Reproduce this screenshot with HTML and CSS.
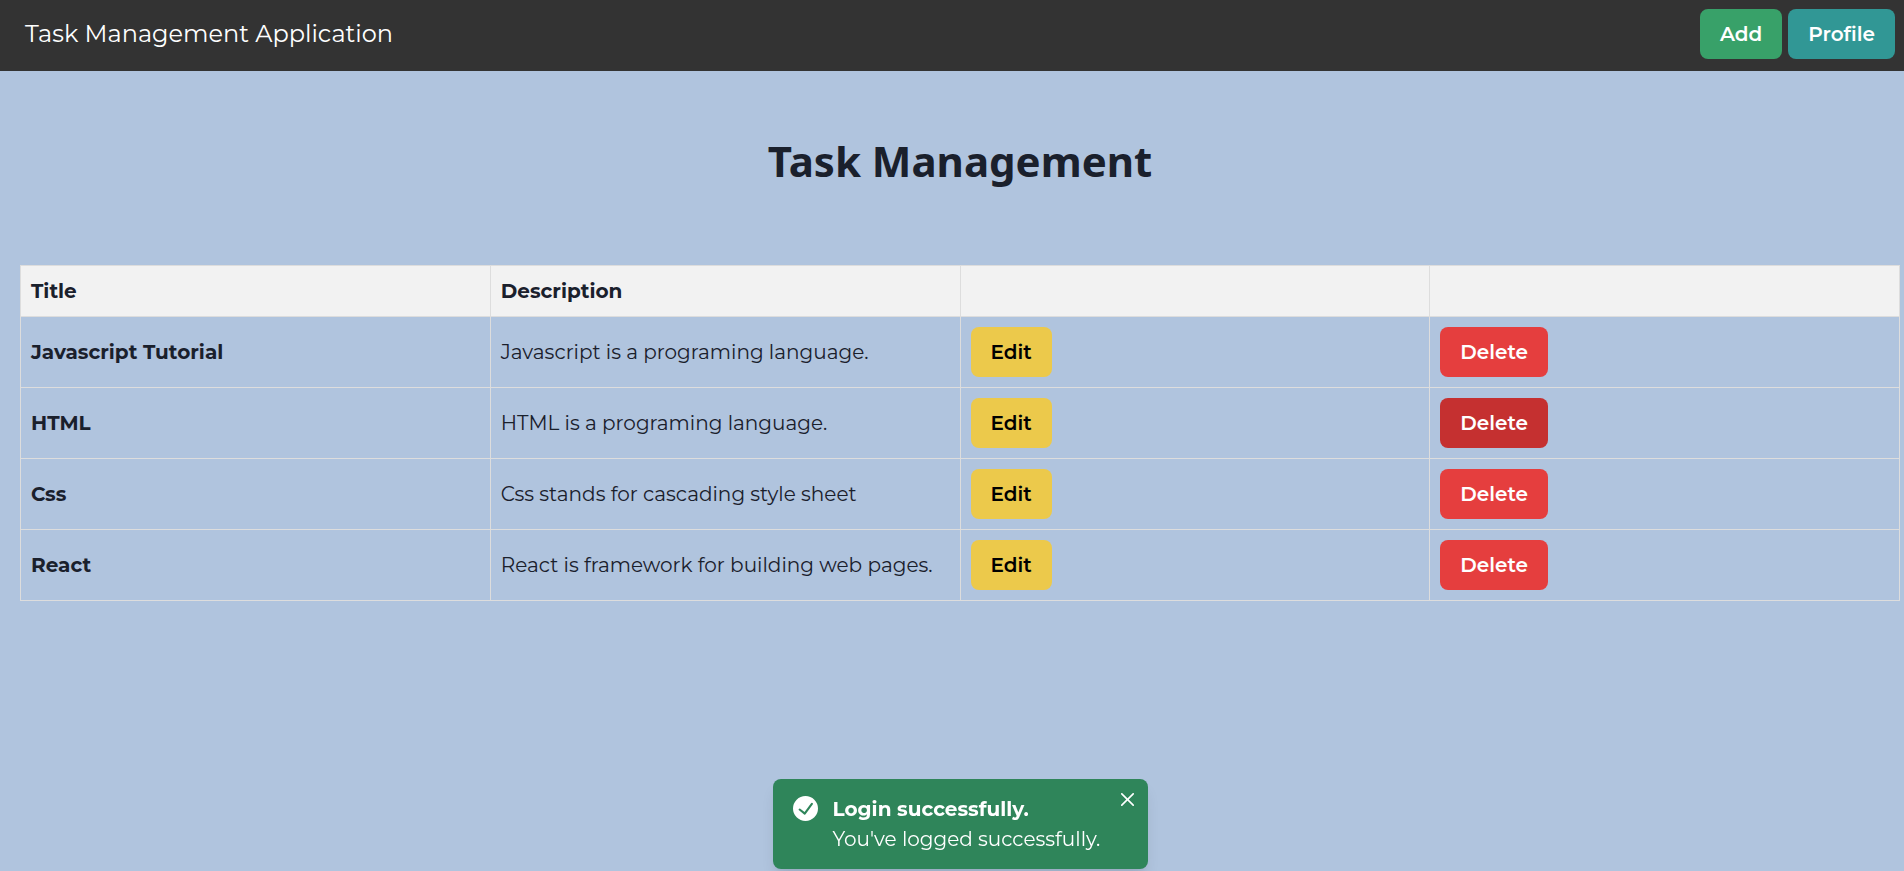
FILE: index.html
```html
<!DOCTYPE html>
<html lang="en">
<head>
  <meta charset="utf-8">
  <meta name="viewport" content="width=device-width, initial-scale=1">
  <title>Task Management Application</title>
  <link rel="stylesheet" href="styles.css">
</head>
<body>
  <header class="navbar">
    <a class="brand" href="#">Task Management Application</a>
    <nav class="nav-actions">
      <button class="btn btn-add" type="button">Add</button>
      <button class="btn btn-profile" type="button">Profile</button>
    </nav>
  </header>

  <main class="content">
    <h1 class="page-title">Task Management</h1>
    <table class="tasks">
      <thead>
        <tr><th scope="col">Title</th><th scope="col">Description</th><th></th><th></th></tr>
      </thead>
      <tbody>
        <tr>
          <th scope="row">Javascript Tutorial</th>
          <td>Javascript is a programing language.</td>
          <td><button class="btn btn-edit" type="button">Edit</button></td>
          <td><button class="btn btn-delete" type="button">Delete</button></td>
        </tr>
        <tr>
          <th scope="row">HTML</th>
          <td>HTML is a programing language.</td>
          <td><button class="btn btn-edit" type="button">Edit</button></td>
          <td><button class="btn btn-delete is-hovered" type="button">Delete</button></td>
        </tr>
        <tr>
          <th scope="row">Css</th>
          <td>Css stands for cascading style sheet</td>
          <td><button class="btn btn-edit" type="button">Edit</button></td>
          <td><button class="btn btn-delete" type="button">Delete</button></td>
        </tr>
        <tr>
          <th scope="row">React</th>
          <td>React is framework for building web pages.</td>
          <td><button class="btn btn-edit" type="button">Edit</button></td>
          <td><button class="btn btn-delete" type="button">Delete</button></td>
        </tr>
      </tbody>
    </table>
  </main>

  <div class="toast-region">
    <div class="toast" role="status">
      <svg class="toast-icon" viewBox="0 0 24 24" aria-hidden="true">
        <path fill="currentColor" d="M12,0A12,12,0,1,0,24,12,12.014,12.014,0,0,0,12,0Zm6.927,8.2-6.845,9.289a1.011,1.011,0,0,1-1.43.188L5.764,13.769a1,1,0,1,1,1.25-1.562l4.076,3.261,6.227-8.451A1,1,0,1,1,18.927,8.2Z"/>
      </svg>
      <div class="toast-body">
        <div class="toast-title">Login successfully.</div>
        <div class="toast-text">You've logged successfully.</div>
      </div>
      <button class="toast-close" type="button" aria-label="Close">
        <svg viewBox="0 0 24 24" aria-hidden="true">
          <path fill="currentColor" d="M.439,21.44a1.5,1.5,0,0,0,2.122,2.121L11.823,14.3a.25.25,0,0,1,.354,0l9.262,9.263a1.5,1.5,0,1,0,2.122-2.121L14.3,12.177a.25.25,0,0,1,0-.354l9.263-9.262A1.5,1.5,0,0,0,21.439.44L12.177,9.7a.25.25,0,0,1-.354,0L2.561.44A1.5,1.5,0,0,0,.439,2.561L9.7,11.823a.25.25,0,0,1,0,.354Z"/>
        </svg>
      </button>
    </div>
  </div>
</body>
</html>
```
FILE: styles.css
```css
* {
  box-sizing: border-box;
}

body {
  margin: 0;
  min-height: 100vh;
  background: #b0c4de;
  color: #1a202c;
  font-family: Montserrat, Inter, sans-serif;
  font-size: 20px;
  line-height: 30px;
}

.navbar {
  display: flex;
  align-items: center;
  justify-content: space-between;
  padding: 9px 9px 12px 25px;
  background: #333;
}

.brand {
  color: #fff;
  font-size: 24px;
  text-decoration: none;
}

.nav-actions {
  display: flex;
  gap: 6px;
}

.btn {
  display: block;
  height: 50px;
  padding: 0 20px;
  border: 0;
  border-radius: 8px;
  color: #fff;
  font: inherit;
  font-weight: 600;
}

.btn-add {
  background: #38a169;
}

.btn-profile {
  background: #319795;
}

.btn-edit {
  background: #ecc94b;
  color: #000;
}

.btn-delete {
  background: #e53e3e;
}

.btn-delete:hover,
.btn-delete.is-hovered {
  background: #c53030;
}

.content {
  padding: 60px 4px 0 20px;
}

.page-title {
  margin: 0 0 74px;
  font-family: "Segoe UI", "Noto Sans", sans-serif;
  font-size: 42px;
  font-weight: 700;
  line-height: 60px;
  text-align: center;
}

.tasks {
  width: 100%;
  border-collapse: collapse;
  table-layout: fixed;
}

.tasks th,
.tasks td {
  padding: 10px;
  border: 1px solid #ddd;
  text-align: left;
}

.tasks th {
  font-weight: 700;
}

.tasks td {
  font-weight: 400;
}

.tasks thead th {
  background: #f2f2f2;
}

.toast-region {
  position: fixed;
  right: 0;
  bottom: 2px;
  left: 16px;
  display: flex;
  justify-content: center;
}

.toast {
  position: relative;
  display: flex;
  gap: 15px;
  width: 375px;
  padding: 15px 40px 15px 20px;
  border-radius: 8px;
  background: #2f855a;
  box-shadow: 0 10px 15px -3px rgba(0, 0, 0, 0.1), 0 4px 6px -2px rgba(0, 0, 0, 0.05);
  color: #fff;
}

.toast-icon {
  flex: none;
  width: 25px;
  height: 25px;
  margin-top: 2px;
}

.toast-title {
  font-weight: 700;
}

.toast-text {
  white-space: nowrap;
}

.toast-close {
  position: absolute;
  top: 5px;
  right: 5px;
  display: grid;
  place-items: center;
  width: 30px;
  height: 30px;
  padding: 0;
  border: 0;
  background: none;
  color: inherit;
}

.toast-close svg {
  width: 13px;
  height: 13px;
}
```
